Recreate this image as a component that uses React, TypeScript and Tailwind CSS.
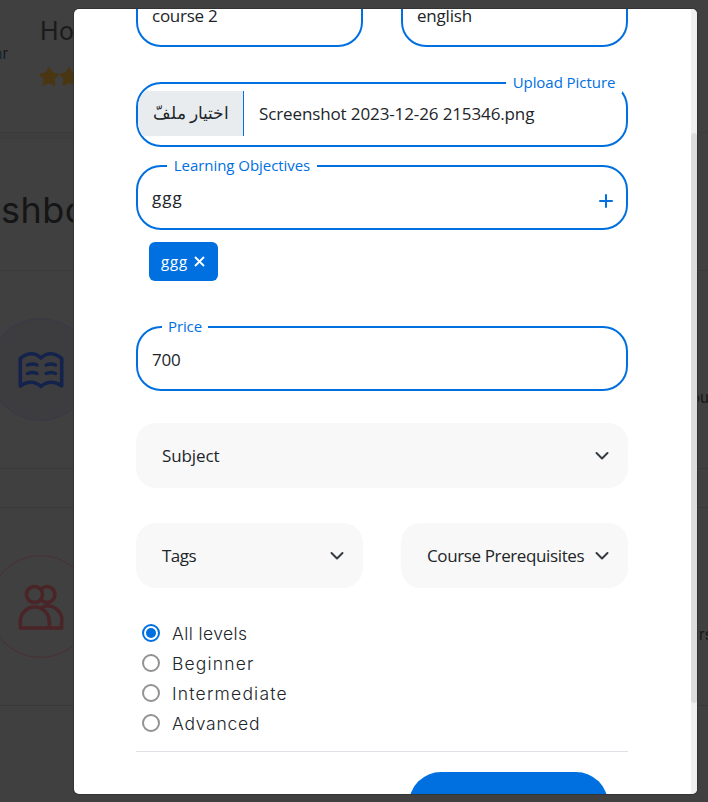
import type { ReactNode } from "react";

const levels = [
  { name: "All levels", tracking: "tracking-[0.4px]" },
  { name: "Beginner", tracking: "tracking-[1.15px]" },
  { name: "Intermediate", tracking: "tracking-[1.2px]" },
  { name: "Advanced", tracking: "tracking-[0.75px]" },
];

function Star() {
  return (
    <svg width="20" height="19" viewBox="0 0 20 19" className="shrink-0 fill-[#4a3712]">
      <path d="M9 .8c.4-.8 1.6-.8 2 0l2.3 4.8 5.4.8c1 .1 1.300 1.200.6 1.900l-3.900 3.800.9 5.300c.1.9-.8 1.500-1.600 1.100L10 16l-4.800 2.500c-.8.4-1.700-.2-1.600-1.100l.9-5.300L.7 8.300C0 7.600.3 6.500 1.300 6.400l5.400-.8z" />
    </svg>
  );
}

function BookIcon() {
  return (
    <svg width="46" height="38" viewBox="0 0 46 38" fill="none" stroke="#14234c" strokeWidth="3.600" strokeLinecap="round" strokeLinejoin="round">
      <path d="M2.300 35V7.500C9 1.500 17 1 23 7C29 1 37 1.500 43.700 7.500V35C37 30 29 30 23 35.500C17 30 9 30 2.300 35Z" />
      <path strokeWidth="3.400" d="M9.500 14q5.500-2 9.500 0M28 14q5.500-2 9.500 0M9.500 22.500q5.500-2 9.500 0M28 22.500q5.500-2 9.500 0" />
    </svg>
  );
}

function PeopleIcon() {
  return (
    <svg width="46" height="46" viewBox="0 0 46 46" fill="none" stroke="#4a2426" strokeWidth="3.600" strokeLinejoin="round">
      <circle cx="16.500" cy="10.500" r="8" />
      <path d="M23 5.200A8 8 0 1 1 23 15.800" />
      <path d="M2.300 44V37.500a14.500 14.500 0 0 1 29 0v6.500Z" />
      <path d="M22.500 24a14 14 0 0 1 21.200 13.500v6.500H31" />
    </svg>
  );
}

function Chevron() {
  return (
    <svg width="16" height="16" viewBox="0 0 16 16" fill="none" stroke="#343a40" strokeWidth="2" strokeLinecap="round" strokeLinejoin="round">
      <path d="m2.500 5 5.500 5.500 5.500-5.500" />
    </svg>
  );
}

function Field({ label, labelClass, children }: { label?: string; labelClass?: string; children: ReactNode }) {
  return (
    <div className="relative flex h-[65px] w-full items-center rounded-[25px] border-2 border-[#0070e0]">
      {children}
      {label && (
        <span className={`absolute -top-3 flex h-[21px] items-center justify-center whitespace-nowrap bg-white text-[15px] text-[#0070e0] ${labelClass}`}>
          {label}
        </span>
      )}
    </div>
  );
}

function Select({ label, tracking }: { label: string; tracking: string }) {
  return (
    <div className="flex h-[65px] w-full items-center justify-between rounded-[20px] bg-[#f8f8f8] pl-[26px] pr-[18px]">
      <span className={`whitespace-nowrap ${tracking}`}>{label}</span>
      <Chevron />
    </div>
  );
}

function Backdrop() {
  return (
    <div className="flex h-full justify-between font-['Inter','Liberation_Sans',sans-serif] text-[#151515]">
      <div className="w-[74px] overflow-hidden">
        <div className="h-[133px] border-b border-[#3b3b3b] pt-[17px]">
          <div className="flex h-[62px]">
            <span className="w-[40px] shrink-0 pt-[27px] text-[15px] leading-5 text-[#191919]"><span className="-ml-[6px] text-[#14283c]">a</span>r</span>
            <div>
              <div className="text-[25px] leading-7 tracking-[0.5px] text-[#1b1b1b]">Ho</div>
              <div className="-ml-px mt-[22px] flex"><Star /><Star /></div>
            </div>
          </div>
        </div>
        <div className="h-[6px] border-b border-[#3d3d3d] bg-[#3e3e3e]" />
        <div className="h-[132px] border-b border-[#3a3a3a] pl-px pt-[48px] text-[36px] leading-[46px] tracking-[0.5px]">shbo</div>
        <div className="h-[198px] border-b border-[#393939] pt-[47px]">
          <div className="-ml-[11px] flex size-[103px] items-center justify-center rounded-full border border-[#38384a] bg-[#3d3d40]"><BookIcon /></div>
        </div>
        <div className="h-[39px] border-b border-[#393939]" />
        <div className="h-[198px] border-b border-[#393939] pt-[47px]">
          <div className="-ml-[11px] flex size-[103px] items-center justify-center rounded-full border border-[#492f32]"><PeopleIcon /></div>
        </div>
      </div>
      <div className="w-[14px] overflow-hidden text-[15px] leading-5">
        <div className="h-[133px] border-b border-[#3b3b3b]" />
        <div className="h-[138px] border-b border-[#3a3a3a]" />
        <div className="h-[198px] border-b border-[#393939] pt-[117px]"><span className="-ml-[3px]">ou</span></div>
        <div className="h-[39px] border-b border-[#393939]" />
        <div className="h-[198px] border-b border-[#393939] pl-[5px] pt-[117px]">rs</div>
      </div>
    </div>
  );
}

export default function App() {
  return (
    <div className="relative h-[802px] w-[708px] overflow-hidden bg-[#404040]">
      <Backdrop />
      <div className="absolute left-[74px] top-[9px] flex h-[785px] w-[623px] overflow-hidden rounded-[5px] bg-white font-['Open_Sans','Noto_Sans',sans-serif] text-[17px] text-[#212529] shadow-[0_0_0_1px_#333333]">
        <div className="flex-1 px-[62px] pr-[63px]">
          <div className="-mt-[27px] flex gap-[38px]">
            <Field><span className="pl-[14px] pt-[2px] tracking-[-0.25px]">course 2</span></Field>
            <Field><span className="pl-[14px] pt-[2px] tracking-[-0.2px]">english</span></Field>
          </div>
          <div className="mt-[35px]">
            <Field label="Upload Picture" labelClass="right-1 w-[116px] tracking-[-0.05px]">
              <div className="flex h-full w-full items-center overflow-hidden rounded-[23px] pb-[2px]">
                <span dir="rtl" className="flex h-[45px] w-[106px] items-center justify-center border-r border-[#0070e0] bg-[#e9ecef] pl-px text-[16.500px]">اختيار ملفّ</span>
                <span className="ml-[15px] whitespace-nowrap tracking-[-0.12px]">Screenshot 2023-12-26 215346.png</span>
              </div>
            </Field>
          </div>
          <div className="mt-[18px]">
            <Field label="Learning Objectives" labelClass="left-[29px] w-[150px] tracking-[-0.05px]">
              <span className="flex-1 pl-[14px] pt-px tracking-[1px]">ggg</span>
              <svg width="16" height="16" viewBox="0 0 16 16" className="mr-[12px] mt-[6px]" fill="none" stroke="#0070e0" strokeWidth="2" strokeLinecap="round">
                <path d="M8 2v12M2 8h12" />
              </svg>
            </Field>
          </div>
          <div className="ml-[13px] mt-[12px] flex h-[39px] w-[69px] items-center justify-between rounded-[6px] bg-[#0070e0] pl-3 pr-[13px] text-[15px] text-white">
            <span className="tracking-[0.9px]">ggg</span>
            <svg width="11" height="11" viewBox="0 0 11 11" fill="none" stroke="white" strokeWidth="1.800"><path d="m1 1 9 9M10 1l-9 9" /></svg>
          </div>
          <div className="mt-[45px]">
            <Field label="Price" labelClass="left-[24px] w-[46px] tracking-[-0.1px]"><span className="pl-[14px] pt-[2px] tracking-[-0.2px]">700</span></Field>
          </div>
          <div className="mt-[32px]"><Select label="Subject" tracking="tracking-[-0.1px]" /></div>
          <div className="mt-[35px] grid grid-cols-2 gap-[38px]">
            <Select label="Tags" tracking="tracking-[-0.5px]" />
            <Select label="Course Prerequisites" tracking="tracking-[-0.38px]" />
          </div>
          <div className="mt-[31px] pl-[6px] font-['Inter','Liberation_Sans',sans-serif] text-[17.500px] font-light">
            {levels.map((level, index) => (
              <label key={level.name} className="flex h-[30px] items-center gap-[12px]">
                <span className={`mb-[2px] flex size-[18px] items-center justify-center rounded-full border-2 ${index === 0 ? "border-[#0070e0]" : "border-[#929292]"}`}>
                  {index === 0 && <span className="size-[10px] rounded-full bg-[#0070e0]" />}
                </span>
                <span className={`pt-px ${level.tracking}`}>{level.name}</span>
              </label>
            ))}
          </div>
          <div className="mt-[12px] border-t border-[#dee2e6]" />
          <div className="ml-[273px] mt-[20px] h-[65px] w-[199px] rounded-[32px] bg-[#0070e0]" />
        </div>
        <div className="w-[6px] bg-[#f0f0f0] pt-[124px]">
          <div className="h-[570px] rounded-[3px] bg-[#dcdcdc]" />
        </div>
      </div>
    </div>
  );
}
